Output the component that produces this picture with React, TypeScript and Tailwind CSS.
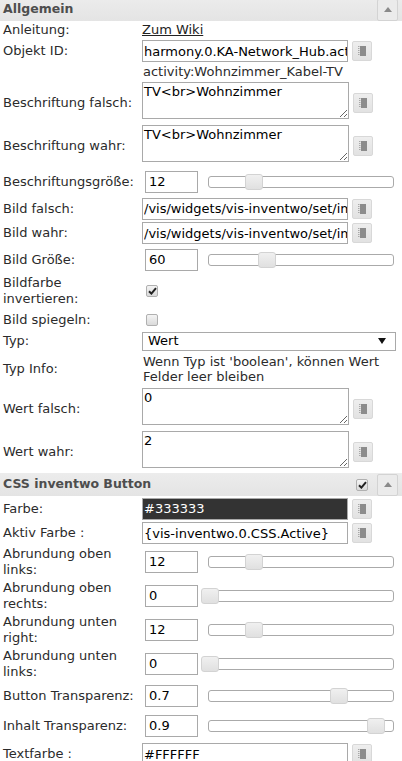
import React from "react";

const FONT = { fontFamily: '"DejaVu Sans", Verdana, sans-serif' };

function NoteIcon() {
  return (
    <svg width="8" height="10" viewBox="0 0 8 10">
      <rect x="2" y="0" width="6" height="10" fill="#8c8c8c" />
      <rect x="0" y="0" width="1.5" height="1" fill="#a8a8a8" />
      <rect x="0" y="2" width="1.5" height="1" fill="#a8a8a8" />
      <rect x="0" y="4" width="1.5" height="1" fill="#a8a8a8" />
      <rect x="0" y="6" width="1.5" height="1" fill="#a8a8a8" />
      <rect x="0" y="8" width="1.5" height="1" fill="#a8a8a8" />
    </svg>
  );
}

function IconBtn() {
  return (
    <div className="ml-[4px] w-[20px] h-[20px] shrink-0 rounded-[2px] border border-[#d8d8d8] bg-gradient-to-b from-[#eeeeee] to-[#e2e2e2] flex items-center justify-center">
      <NoteIcon />
    </div>
  );
}

function Check({ checked }: { checked: boolean }) {
  return (
    <div className="w-[12px] h-[12px] rounded-[2px] border border-[#b0b0b0] bg-gradient-to-b from-[#f4f4f4] to-[#dadada] flex items-center justify-center">
      {checked && (
        <svg width="9" height="8" viewBox="0 0 9 8">
          <path d="M1 4.2 L3.4 6.6 L8 1.2" stroke="#222" strokeWidth="2" fill="none" />
        </svg>
      )}
    </div>
  );
}

function Row({ h, label, children }: { h: number; label: React.ReactNode; children?: React.ReactNode }) {
  return (
    <div className="flex items-center" style={{ height: h }}>
      <div className="w-[142px] shrink-0 pl-[3px] leading-[16px] text-[#2b2b2b]">{label}</div>
      <div className="flex items-center flex-1 min-w-0">{children}</div>
    </div>
  );
}

function TextIn({ value, dark }: { value: string; dark?: boolean }) {
  return (
    <>
      <input
        readOnly
        value={value}
        className={
          "block w-[206px] h-[22px] shrink-0 border border-[#a9a9a9] pl-[1px] pr-0 outline-none text-[13px] " +
          (dark ? "bg-[#333333] text-white" : "bg-white text-black")
        }
        style={FONT}
      />
      <IconBtn />
    </>
  );
}

function Area({ value }: { value: string }) {
  return (
    <>
      <textarea
        readOnly
        value={value}
        className="block w-[207px] h-[37px] mb-[4px] shrink-0 border border-[#a9a9a9] px-[1px] pt-[1px] leading-[15px] text-[13px] text-black outline-none resize overflow-hidden"
        style={FONT}
      />
      <IconBtn />
    </>
  );
}

function Slider({ value, pct }: { value: string; pct: number }) {
  return (
    <>
      <div className="ml-[3px] w-[53px] h-[22px] shrink-0 border border-[#a9a9a9] pl-[3px] flex items-center text-black bg-white">
        {value}
      </div>
      <div className="relative ml-[10px] w-[186px] h-[12px] shrink-0 rounded-[3px] border border-[#aaaaaa] bg-white">
        <div
          className="absolute top-[-3px] w-[18px] h-[16px] rounded-[3px] border border-[#d3d3d3] bg-gradient-to-b from-[#f0f0f0] to-[#e0e0e0]"
          style={{ left: 1 + pct * 184 - 9 }}
        />
      </div>
    </>
  );
}

function Header({ title, check, h, className }: { title: string; check?: boolean; h: number; className?: string }) {
  return (
    <div
      className={"flex items-center bg-gradient-to-b from-[#ececec] to-[#e4e4e4] pl-[3px] pr-[4px] " + (className || "")}
      style={{ height: h }}
    >
      <div className="flex-1 font-bold text-[12.5px] text-[#4e4e4e]">{title}</div>
      {check && (
        <div className="mr-[9px]">
          <Check checked />
        </div>
      )}
      <div className="w-[21px] h-[22px] border border-[#d3d3d3] rounded-[2px] bg-[#ebebeb] flex items-center justify-center">
        <svg width="8" height="5" viewBox="0 0 8 5">
          <path d="M0 5 L4 0 L8 5 Z" fill="#8a8a8a" />
        </svg>
      </div>
    </div>
  );
}

export default function App() {
  return (
    <div className="w-[402px] h-[761px] overflow-hidden bg-white text-[13px]" style={FONT}>
      <Header title="Allgemein" h={23} className="-mt-[2px]" />
      <Row h={18} label="Anleitung:">
        <span className="underline text-[#222]">Zum Wiki</span>
      </Row>
      <Row h={24} label="Objekt ID:">
        <TextIn value="harmony.0.KA-Network_Hub.activity" />
      </Row>
      <Row h={18} label="">
        <span className="text-[#2b2b2b] pl-[1px]">activity:Wohnzimmer_Kabel-TV</span>
      </Row>
      <Row h={43} label="Beschriftung falsch:">
        <Area value="TV<br>Wohnzimmer" />
      </Row>
      <Row h={43} label="Beschriftung wahr:">
        <Area value="TV<br>Wohnzimmer" />
      </Row>
      <Row h={29} label="Beschriftungsgröße:">
        <Slider value="12" pct={0.24} />
      </Row>
      <Row h={25} label="Bild falsch:">
        <TextIn value="/vis/widgets/vis-inventwo/set/img" />
      </Row>
      <Row h={24} label="Bild wahr:">
        <TextIn value="/vis/widgets/vis-inventwo/set/img" />
      </Row>
      <Row h={29} label="Bild Größe:">
        <Slider value="60" pct={0.31} />
      </Row>
      <Row h={34} label={<>Bildfarbe<br />invertieren:</>}>
        <div className="ml-[4px]">
          <Check checked />
        </div>
      </Row>
      <Row h={23} label="Bild spiegeln:">
        <div className="ml-[4px]">
          <Check checked={false} />
        </div>
      </Row>
      <Row h={20} label="Typ:">
        <div className="w-[254px] h-[19px] border border-[#a9a9a9] bg-white flex items-center pl-[5px] pr-[9px] text-black">
          <span className="flex-1">Wert</span>
          <svg width="8" height="6" viewBox="0 0 8 6">
            <path d="M0 0 L8 0 L4 6 Z" fill="#111" />
          </svg>
        </div>
      </Row>
      <Row h={36} label="Typ Info:">
        <div className="leading-[15px] text-[#2b2b2b] pl-[1px] whitespace-nowrap">
          Wenn Typ ist 'boolean', können Wert
          <br />
          Felder leer bleiben
        </div>
      </Row>
      <Row h={43} label="Wert falsch:">
        <Area value="0" />
      </Row>
      <Row h={43} label="Wert wahr:">
        <Area value="2" />
      </Row>
      <Header title="CSS inventwo Button" check h={23} />
      <Row h={25} label="Farbe:">
        <TextIn value="#333333" dark />
      </Row>
      <Row h={24} label="Aktiv Farbe :">
        <TextIn value="{vis-inventwo.0.CSS.Active}" />
      </Row>
      <Row h={34} label={<>Abrundung oben<br />links:</>}>
        <Slider value="12" pct={0.24} />
      </Row>
      <Row h={34} label={<>Abrundung oben<br />rechts:</>}>
        <Slider value="0" pct={0} />
      </Row>
      <Row h={34} label={<>Abrundung unten<br />right:</>}>
        <Slider value="12" pct={0.24} />
      </Row>
      <Row h={34} label={<>Abrundung unten<br />links:</>}>
        <Slider value="0" pct={0} />
      </Row>
      <Row h={30} label="Button Transparenz:">
        <Slider value="0.7" pct={0.7} />
      </Row>
      <Row h={30} label="Inhalt Transparenz:">
        <Slider value="0.9" pct={0.9} />
      </Row>
      <Row h={26} label="Textfarbe :">
        <TextIn value="#FFFFFF" />
      </Row>
    </div>
  );
}
